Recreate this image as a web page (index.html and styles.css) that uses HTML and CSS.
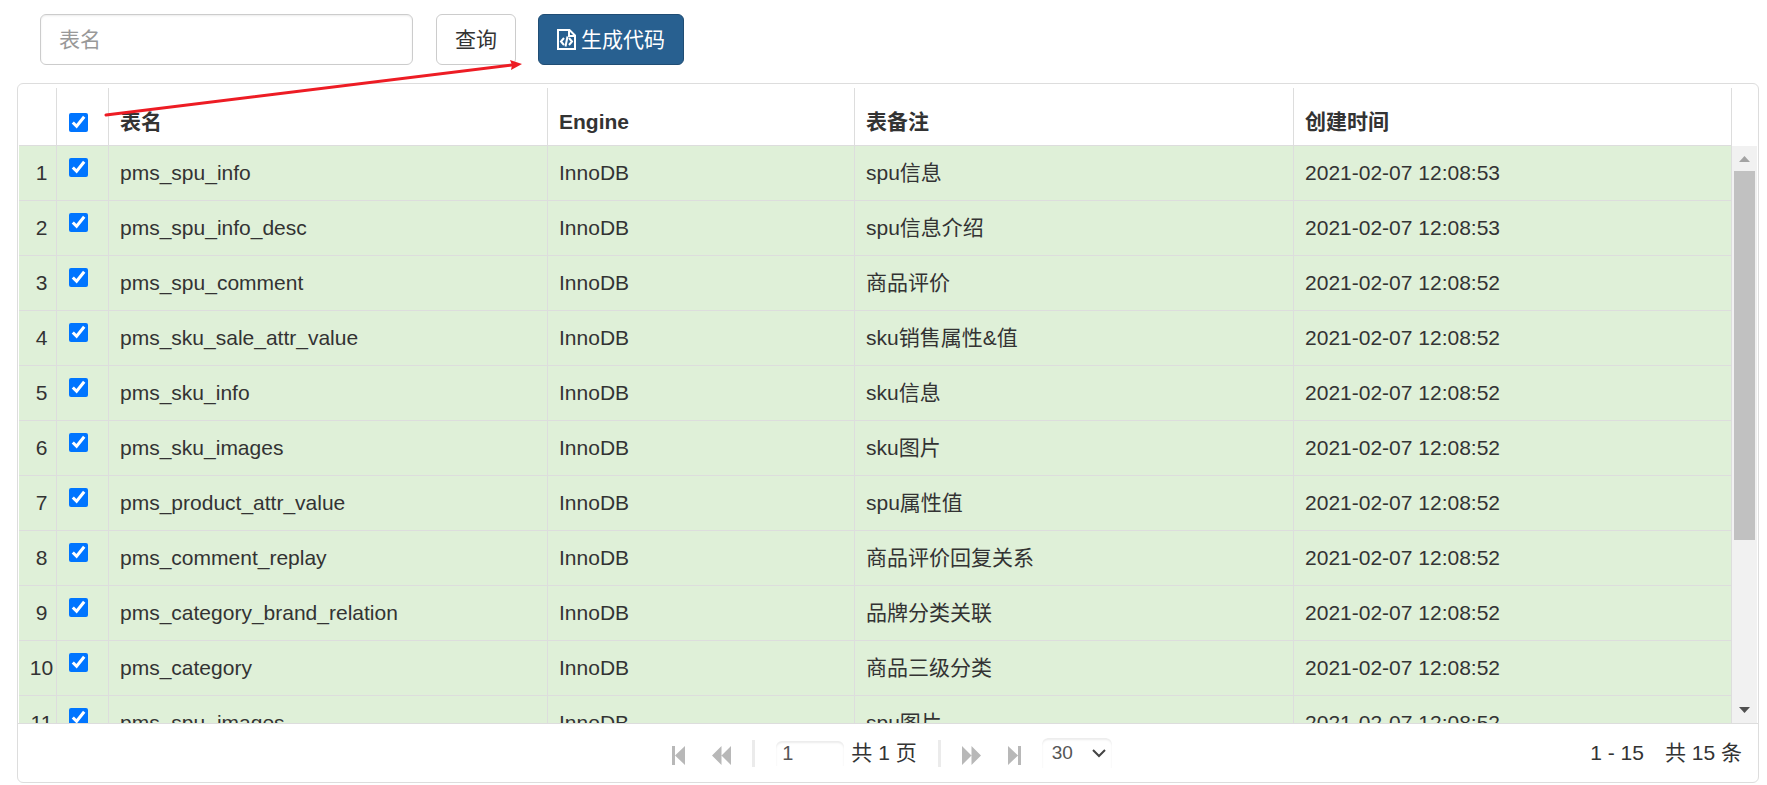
FILE: index.html
```
<!DOCTYPE html>
<html lang="zh-CN">
<head>
    <meta charset="UTF-8">
    <meta name="viewport" content="width=device-width, initial-scale=1">
    <title>代码生成</title>
    <link rel="stylesheet" href="styles.css">
</head>
<body>
    <form class="toolbar">
        <input type="text" class="form-control" placeholder="表名" aria-label="表名">
        <button type="button" class="btn btn-default">查询</button>
        <button type="button" class="btn btn-primary">
            <svg class="icon-code" viewBox="0 0 19 21" aria-hidden="true">
                <path d="M1 1H12.5L18 6.5V20H1Z M12 1V7H18" fill="none" stroke="#fff" stroke-width="2"/>
                <path d="M7 9L4 12.5L7 16 M12 9L15 12.5L12 16 M10.5 7.5L8.5 17.500" fill="none" stroke="#fff" stroke-width="2"/>
            </svg>
            生成代码
        </button>
    </form>

    <div class="grid">
        <div class="grid-head">
            <table>
                <colgroup><col class="c-num"><col class="c-check"><col class="c-name"><col class="c-engine"><col class="c-remark"><col></colgroup>
                <thead>
                    <tr><th></th><th class="check"><input type="checkbox" aria-label="全选" checked></th><th>表名</th><th>Engine</th><th>表备注</th><th>创建时间</th></tr>
                </thead>
            </table>
        </div>
        <div class="grid-main">
            <div class="grid-body">
                <table>
                    <colgroup><col class="c-num"><col class="c-check"><col class="c-name"><col class="c-engine"><col class="c-remark"><col></colgroup>
                    <tbody>
                        <tr><td class="num">1</td><td class="check"><input type="checkbox" aria-label="pms_spu_info" checked></td><td>pms_spu_info</td><td>InnoDB</td><td>spu信息</td><td>2021-02-07 12:08:53</td></tr>
                        <tr><td class="num">2</td><td class="check"><input type="checkbox" aria-label="pms_spu_info_desc" checked></td><td>pms_spu_info_desc</td><td>InnoDB</td><td>spu信息介绍</td><td>2021-02-07 12:08:53</td></tr>
                        <tr><td class="num">3</td><td class="check"><input type="checkbox" aria-label="pms_spu_comment" checked></td><td>pms_spu_comment</td><td>InnoDB</td><td>商品评价</td><td>2021-02-07 12:08:52</td></tr>
                        <tr><td class="num">4</td><td class="check"><input type="checkbox" aria-label="pms_sku_sale_attr_value" checked></td><td>pms_sku_sale_attr_value</td><td>InnoDB</td><td>sku销售属性&amp;值</td><td>2021-02-07 12:08:52</td></tr>
                        <tr><td class="num">5</td><td class="check"><input type="checkbox" aria-label="pms_sku_info" checked></td><td>pms_sku_info</td><td>InnoDB</td><td>sku信息</td><td>2021-02-07 12:08:52</td></tr>
                        <tr><td class="num">6</td><td class="check"><input type="checkbox" aria-label="pms_sku_images" checked></td><td>pms_sku_images</td><td>InnoDB</td><td>sku图片</td><td>2021-02-07 12:08:52</td></tr>
                        <tr><td class="num">7</td><td class="check"><input type="checkbox" aria-label="pms_product_attr_value" checked></td><td>pms_product_attr_value</td><td>InnoDB</td><td>spu属性值</td><td>2021-02-07 12:08:52</td></tr>
                        <tr><td class="num">8</td><td class="check"><input type="checkbox" aria-label="pms_comment_replay" checked></td><td>pms_comment_replay</td><td>InnoDB</td><td>商品评价回复关系</td><td>2021-02-07 12:08:52</td></tr>
                        <tr><td class="num">9</td><td class="check"><input type="checkbox" aria-label="pms_category_brand_relation" checked></td><td>pms_category_brand_relation</td><td>InnoDB</td><td>品牌分类关联</td><td>2021-02-07 12:08:52</td></tr>
                        <tr><td class="num">10</td><td class="check"><input type="checkbox" aria-label="pms_category" checked></td><td>pms_category</td><td>InnoDB</td><td>商品三级分类</td><td>2021-02-07 12:08:52</td></tr>
                        <tr><td class="num">11</td><td class="check"><input type="checkbox" aria-label="pms_spu_images" checked></td><td>pms_spu_images</td><td>InnoDB</td><td>spu图片</td><td>2021-02-07 12:08:52</td></tr>
                    </tbody>
                </table>
            </div>
            <div class="scrollbar" aria-hidden="true">
                <svg class="scroll-arrow" viewBox="0 0 25 25"><path d="M7 16L12.500 10L18 16Z" fill="#a3a3a3"/></svg>
                <div class="scroll-track"><div class="scroll-thumb"></div></div>
                <svg class="scroll-arrow" viewBox="0 0 25 25"><path d="M7 9L12.500 15L18 9Z" fill="#505050"/></svg>
            </div>
        </div>
        <div class="pager">
            <div class="pager-nav">
                <button type="button" class="page-btn" aria-label="首页"><svg viewBox="0 0 19 19"><path d="M0 0H3V19H0Z M13 0V19L3 9.500Z"/></svg></button>
                <button type="button" class="page-btn" aria-label="上一页"><svg viewBox="0 0 19 19"><path d="M9.500 0V19L0 9.500Z M19 0V19L9.500 9.500Z"/></svg></button>
                <span class="sep"></span>
                <label class="page-num"><input type="text" value="1" aria-label="页码"> 共 1 页</label>
                <span class="sep"></span>
                <button type="button" class="page-btn" aria-label="下一页"><svg viewBox="0 0 19 19"><path d="M0 0V19L9.500 9.500Z M9.500 0V19L19 9.500Z"/></svg></button>
                <button type="button" class="page-btn" aria-label="末页"><svg viewBox="0 0 19 19"><path d="M6 0V19L16 9.500Z M16 0H19V19H16Z"/></svg></button>
                <select class="page-size" aria-label="每页条数">
                    <option>10</option>
                    <option selected>30</option>
                    <option>50</option>
                </select>
            </div>
            <div class="pager-info"><span>1 - 15</span><span>共 15 条</span></div>
        </div>
    </div>

    <svg class="arrow" viewBox="0 0 420 60" aria-hidden="true">
        <path d="M2 57L408 7" stroke="#ed1c24" stroke-width="3" stroke-linecap="round"/>
        <path d="M418 6L406 2L408 7L407 12Z" fill="#ed1c24"/>
    </svg>
</body>
</html>
```
FILE: styles.css
```
* {
    box-sizing: border-box;
}

body {
    margin: 0;
    padding: 14px 8px 2px 17px;
    height: 100vh;
    display: flex;
    flex-direction: column;
    font-family: "Liberation Sans", "Noto Sans CJK SC", sans-serif;
    font-size: 21px;
    line-height: 30px;
    color: #333;
    background-color: #fff;
}

button, input, select {
    font-family: inherit;
    font-size: inherit;
    line-height: inherit;
    color: inherit;
}

/* toolbar */
.toolbar {
    display: flex;
    gap: 22px;
    margin: 0 0 18px 23px;
}

.form-control {
    width: 373px;
    height: 51px;
    margin-right: 1px;
    padding: 6px 18px;
    border: 1px solid #ccc;
    border-radius: 6px;
    box-shadow: inset 0 1px 2px rgba(0, 0, 0, 0.08);
}

.form-control::placeholder {
    color: #999;
}

.btn {
    display: flex;
    align-items: center;
    gap: 5px;
    height: 51px;
    padding: 0 18px;
    border: 1px solid #ccc;
    border-radius: 6px;
    background-color: #fff;
}

.btn-primary {
    color: #fff;
    background-color: #286090;
    border-color: #204d74;
}

.icon-code {
    width: 19px;
    height: 21px;
}

/* grid */
.grid {
    flex: 1;
    min-height: 0;
    display: flex;
    flex-direction: column;
    border: 1px solid #ddd;
    border-radius: 6px;
}

.grid-head {
    padding: 4px 26px 0 1px;
}

.grid-main {
    flex: 1;
    min-height: 0;
    display: flex;
    padding: 0 1px;
}

.grid-body {
    flex: 1;
    overflow-y: auto;
    scrollbar-width: none;
}

table {
    width: 100%;
    table-layout: fixed;
    border-collapse: separate;
    border-spacing: 0;
}

.c-num {
    width: 38px;
}

.c-check {
    width: 52px;
}

.c-name, .c-remark {
    width: 25.63%;
}

.c-engine {
    width: 17.92%;
}

th, td {
    height: 55px;
    padding: 0 11px;
    text-align: left;
    white-space: nowrap;
    border-right: 1px solid #ddd;
    border-bottom: 1px solid #ddd;
}

th {
    height: 58px;
    padding-top: 10px;
}

td {
    background-color: #dff0d8;
}

td.num {
    padding: 0 0 0 8px;
    text-align: center;
}

.check {
    padding-left: 12px;
}

.check input {
    display: block;
    width: 19px;
    height: 19px;
    margin: 0;
}

th.check {
    padding-top: 12px;
}

td.check {
    padding-top: 12px;
    vertical-align: top;
}

.scrollbar {
    width: 25px;
    display: flex;
    flex-direction: column;
    background-color: #f1f1f1;
}

.scroll-arrow {
    width: 25px;
    height: 25px;
}

.scroll-track {
    flex: 1;
    padding: 0 2px;
}

.scroll-thumb {
    height: 70%;
    background-color: #c1c1c1;
}

/* pager */
.pager {
    height: 59px;
    display: grid;
    grid-template-columns: 1fr auto 1fr;
    align-items: center;
    padding: 0 16px 0 24px;
    border-top: 1px solid #ddd;
}

.pager-nav {
    grid-column: 2;
    display: flex;
    align-items: center;
    gap: 21px;
}

.page-btn {
    width: 19px;
    height: 19px;
    margin-top: 4px;
    padding: 0;
    border: 0;
    background: none;
}

.page-btn svg {
    display: block;
    width: 19px;
    height: 19px;
    fill: #b8b8b8;
}

.sep {
    width: 3px;
    height: 27px;
    background-color: #ebebeb;
}

.page-num {
    display: flex;
    align-items: center;
    gap: 7px;
}

.page-num input {
    width: 68px;
    height: 25px;
    padding: 0 6px;
    border: 0;
    border-radius: 6px 6px 0 0;
    box-shadow: inset 0 2px 2px rgba(0, 0, 0, 0.08);
    font-size: 20px;
    line-height: 24px;
    color: #555;
}

.page-size {
    appearance: none;
    width: 70px;
    height: 30px;
    padding: 0 10px;
    border: 0;
    border-radius: 6px 6px 0 0;
    box-shadow: inset 0 2px 2px rgba(0, 0, 0, 0.08);
    background: #fff url("data:image/svg+xml,%3Csvg xmlns='http://www.w3.org/2000/svg' width='14' height='9'%3E%3Cpath d='M1 1L7 7L13 1' fill='none' stroke='%23444' stroke-width='2'/%3E%3C/svg%3E") no-repeat right 6px center;
    font-size: 19px;
    color: #555;
}

.pager-info {
    display: flex;
    justify-content: flex-end;
    gap: 21px;
}

/* hint arrow from the check-all box to the generate button */
.arrow {
    position: absolute;
    left: 104px;
    top: 58px;
    width: 420px;
    height: 60px;
    pointer-events: none;
}
```
